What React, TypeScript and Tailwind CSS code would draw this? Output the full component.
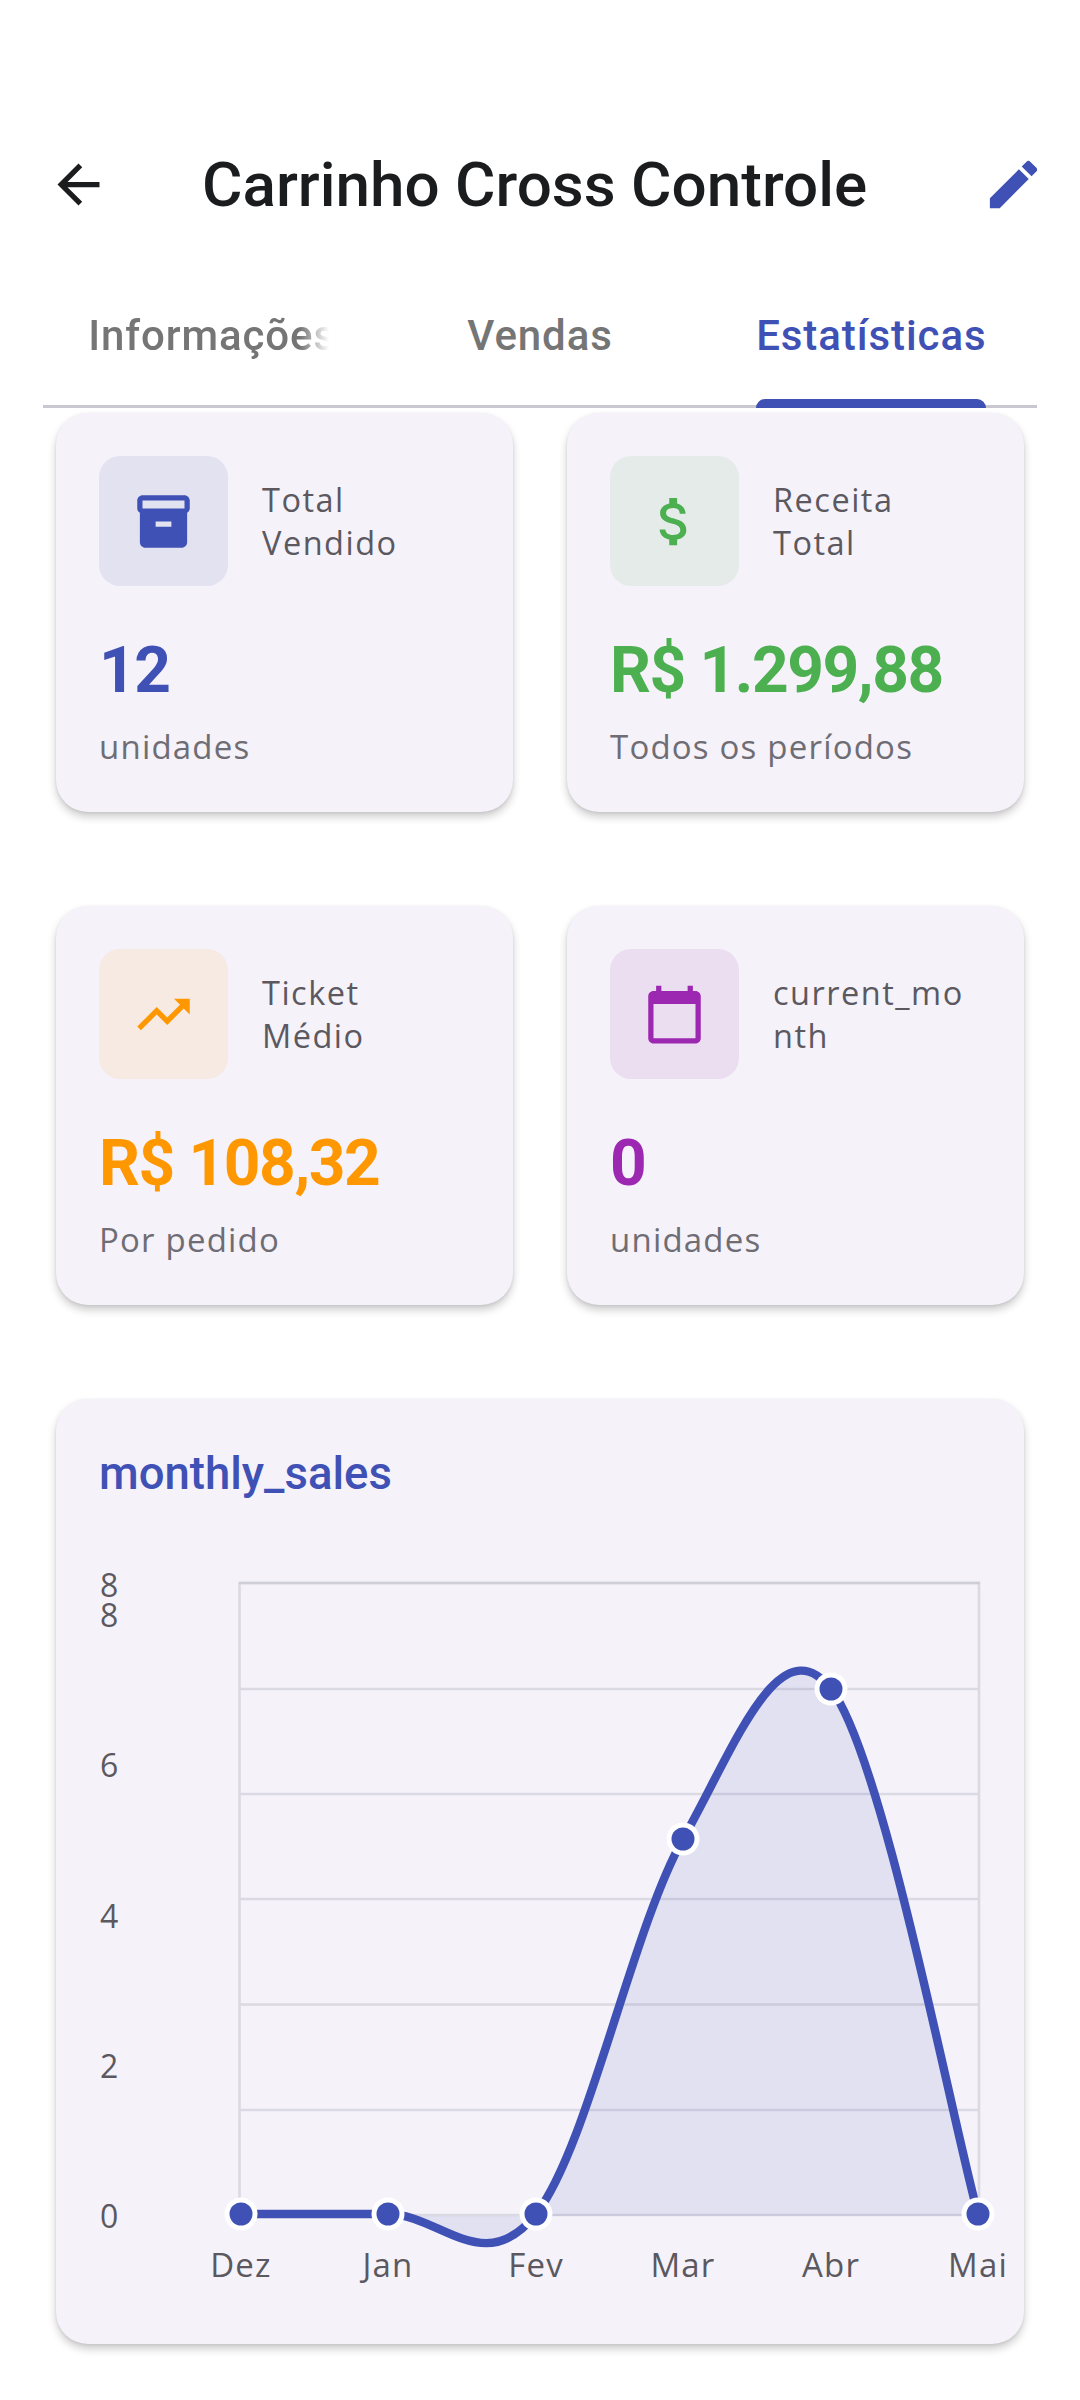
import React from 'react';

const icons = {
  box: 'M20 2H4c-1 0-2 .9-2 2v3.01c0 .72.43 1.34 1 1.69V20c0 1.1 1.1 2 2 2h14c.9 0 2-.9 2-2V8.7c.57-.35 1-.97 1-1.69V4c0-1.1-1-2-2-2zm-5 12H9v-2h6v2zm5-7H4V4l16-.01V7z',
  money: 'M11.8 10.9c-2.27-.59-3-1.2-3-2.15 0-1.09 1.01-1.85 2.7-1.85 1.78 0 2.44.85 2.5 2.1h2.21c-.07-1.72-1.12-3.3-3.21-3.81V3h-3v2.16c-1.94.42-3.5 1.68-3.5 3.61 0 2.31 1.91 3.46 4.7 4.13 2.5.6 3 1.48 3 2.41 0 .69-.49 1.79-2.7 1.79-2.06 0-2.87-.92-2.98-2.1h-2.2c.12 2.19 1.76 3.42 3.68 3.83V21h3v-2.15c1.95-.37 3.5-1.5 3.5-3.55 0-2.84-2.43-3.81-4.7-4.4z',
  trend: 'M16 6l2.29 2.29-4.88 4.88-4-4L2 16.59 3.41 18l6-6 4 4 6.3-6.29L22 12V6z',
  cal: 'M20 3h-1V1h-2v2H7V1H5v2H4c-1.1 0-2 .9-2 2v16c0 1.1.9 2 2 2h16c1.1 0 2-.9 2-2V5c0-1.1-.9-2-2-2zm0 18H4V8h16v13z',
  edit: 'M3 17.25V21h3.75L17.81 9.94l-3.75-3.75L3 17.25zM20.71 7.04c.39-.39.39-1.02 0-1.41l-2.34-2.34c-.39-.39-1.02-.39-1.41 0l-1.83 1.83 3.75 3.75 1.83-1.83z',
  back: 'M20 11H7.83l5.59-5.59L12 4l-8 8 8 8 1.41-1.41L7.83 13H20v-2z',
};

function Icon({ d, className }: { d: string; className: string }) {
  return (
    <svg viewBox="0 0 24 24" className={className} fill="currentColor">
      <path d={d} />
    </svg>
  );
}

function StatCard(props: { icon: string; iconBox: string; iconColor: string; label: string; value: string; valueColor: string; sub: string }) {
  return (
    <div className="h-[399px] rounded-[32px] bg-[#f5f2fa] px-[43px] pt-[43px] shadow-[0_5px_9px_rgba(0,0,0,0.2),0_1px_3px_rgba(0,0,0,0.08)]">
      <div className="flex items-center gap-[34px]">
        <div className={`flex h-[130px] w-[129px] shrink-0 items-center justify-center rounded-[21px] ${props.iconBox}`}>
          <Icon d={props.icon} className={`h-[63px] w-[63px] ${props.iconColor}`} />
        </div>
        <div className="w-[200px] font-['Open_Sans'] text-[32.5px] leading-[43.5px] tracking-[1.5px] text-[#5b595f] [overflow-wrap:anywhere]">
          {props.label}
        </div>
      </div>
      <div className={`mt-[48px] font-['Roboto'] text-[64px] leading-[74px] font-bold tracking-[-1.4px] ${props.valueColor}`}>{props.value}</div>
      <div className="mt-[17px] font-['Open_Sans'] text-[33px] leading-[44px] tracking-[1.2px] text-[#6f6d74]">{props.sub}</div>
    </div>
  );
}

const gridYs = [1583, 1689, 1794, 1899, 2004.5, 2110, 2215];
const pts: [number, number][] = [[241, 2214], [388, 2214], [536, 2214], [683, 1839], [831, 1689], [978, 2214]];
const curve =
  'M241 2214 C241 2214 336.4 2214 388 2214 C439.6 2214 484.4 2279.6 536 2214 C587.6 2148.4 631.4 1930.9 683 1839 C734.6 1747.1 779.4 1623.4 831 1689 C882.6 1754.6 952.3 2122.1 978 2214';
const yLabels: [string, number][] = [['8', 1597], ['8', 1627], ['6', 1777], ['4', 1928], ['2', 2078], ['0', 2228]];
const xLabels: [string, number][] = [['Dez', 241], ['Jan', 388], ['Fev', 536], ['Mar', 683], ['Abr', 831], ['Mai', 978]];

function Chart() {
  return (
    <svg viewBox="56 1560 968 740" className="mt-[58px] block h-[740px] w-[968px] -ml-[43px] overflow-visible">
      {gridYs.map((y) => (
        <line key={y} x1="239" x2="980" y1={y} y2={y} stroke="#dbd9e1" strokeWidth="2.6" />
      ))}
      <line x1="239.5" x2="239.5" y1="1582" y2="2216" stroke="#dbd9e1" strokeWidth="2.6" />
      <line x1="979" x2="979" y1="1582" y2="2216" stroke="#dbd9e1" strokeWidth="2.6" />
      <line x1="239" x2="980" y1="1583" y2="1583" stroke="#cfcdd5" strokeWidth="2.6" />
      <path d={`${curve} L978 2216 L241 2216 Z`} fill="#3f51b5" fillOpacity="0.1" />
      <path d={curve} fill="none" stroke="#3f51b5" strokeWidth="8.4" />
      {pts.map(([x, y]) => (
        <g key={x}>
          <circle cx={x} cy={y} r="16.5" fill="#ffffff" />
          <circle cx={x} cy={y} r="11.5" fill="#3f51b5" />
        </g>
      ))}
      {yLabels.map(([t, y]) => (
        <text key={y} x="100" y={y} className="fill-[#5b595f] font-['Open_Sans'] text-[32px]">{t}</text>
      ))}
      {xLabels.map(([t, x]) => (
        <text key={t} x={x} y="2277" textAnchor="middle" className="fill-[#5b595f] font-['Open_Sans'] text-[33px] tracking-[1.2px]">{t}</text>
      ))}
    </svg>
  );
}

export default function App() {
  return (
    <div className="h-[2400px] w-[1080px] overflow-hidden bg-white">
      <header className="mt-[153px] flex h-[63px] items-center pr-[35px] pl-[47px]">
        <Icon d={icons.back} className="h-[63px] w-[63px] shrink-0 text-[#1a1c1e]" />
        <h1 className="ml-[92px] flex-1 font-['Roboto'] text-[62px] leading-[63px] font-medium whitespace-nowrap text-[#1a1c1e]">Carrinho Cross Controle</h1>
        <Icon d={icons.edit} className="h-[63px] w-[63px] shrink-0 text-[#3f51b5]" />
      </header>

      <nav className="mt-[72px] ml-[43px] grid h-[120px] w-[994px] grid-cols-3 border-b-[3px] border-[#c9c7cf] font-['Roboto'] text-[42px] font-medium tracking-[0.9px]">
        <div className="flex items-start justify-center pt-[16px] text-[#757575]">
          <div className="w-[241px] overflow-hidden whitespace-nowrap [mask-image:linear-gradient(to_right,black_88%,transparent)]">Informações</div>
        </div>
        <div className="flex items-start justify-center pt-[16px] text-[#757575]">Vendas</div>
        <div className="flex items-start justify-center pt-[16px] text-[#3f51b5]">
          <div className="relative h-[101px]">
            Estatísticas
            <div className="absolute right-0 bottom-[-3px] left-0 h-[9px] rounded-t-[9px] bg-[#3f51b5]" />
          </div>
        </div>
      </nav>

      <main className="mx-[56px] mt-[5px] w-[968px]">
        <div className="grid grid-cols-2 gap-x-[54px] gap-y-[94px]">
          <StatCard icon={icons.box} iconBox="bg-[#e2e2f1]" iconColor="text-[#3f51b5]" label="Total Vendido" value="12" valueColor="text-[#3f51b5]" sub="unidades" />
          <StatCard icon={icons.money} iconBox="bg-[#e5ebe8]" iconColor="text-[#4caf50]" label="Receita Total" value="R$ 1.299,88" valueColor="text-[#4caf50]" sub="Todos os períodos" />
          <StatCard icon={icons.trend} iconBox="bg-[#f6eae3]" iconColor="text-[#ff9800]" label="Ticket Médio" value="R$ 108,32" valueColor="text-[#ff9800]" sub="Por pedido" />
          <StatCard icon={icons.cal} iconBox="bg-[#ecdef1]" iconColor="text-[#9c27b0]" label="current_month" value="0" valueColor="text-[#9c27b0]" sub="unidades" />
        </div>
        <section className="mt-[94px] h-[945px] rounded-[32px] bg-[#f5f2fa] px-[43px] pt-[47px] shadow-[0_5px_9px_rgba(0,0,0,0.2),0_1px_3px_rgba(0,0,0,0.08)]">
          <h2 className="font-['Roboto'] text-[45.5px] leading-[56px] font-medium text-[#3f51b5]">monthly_sales</h2>
          <Chart />
        </section>
      </main>
    </div>
  );
}
